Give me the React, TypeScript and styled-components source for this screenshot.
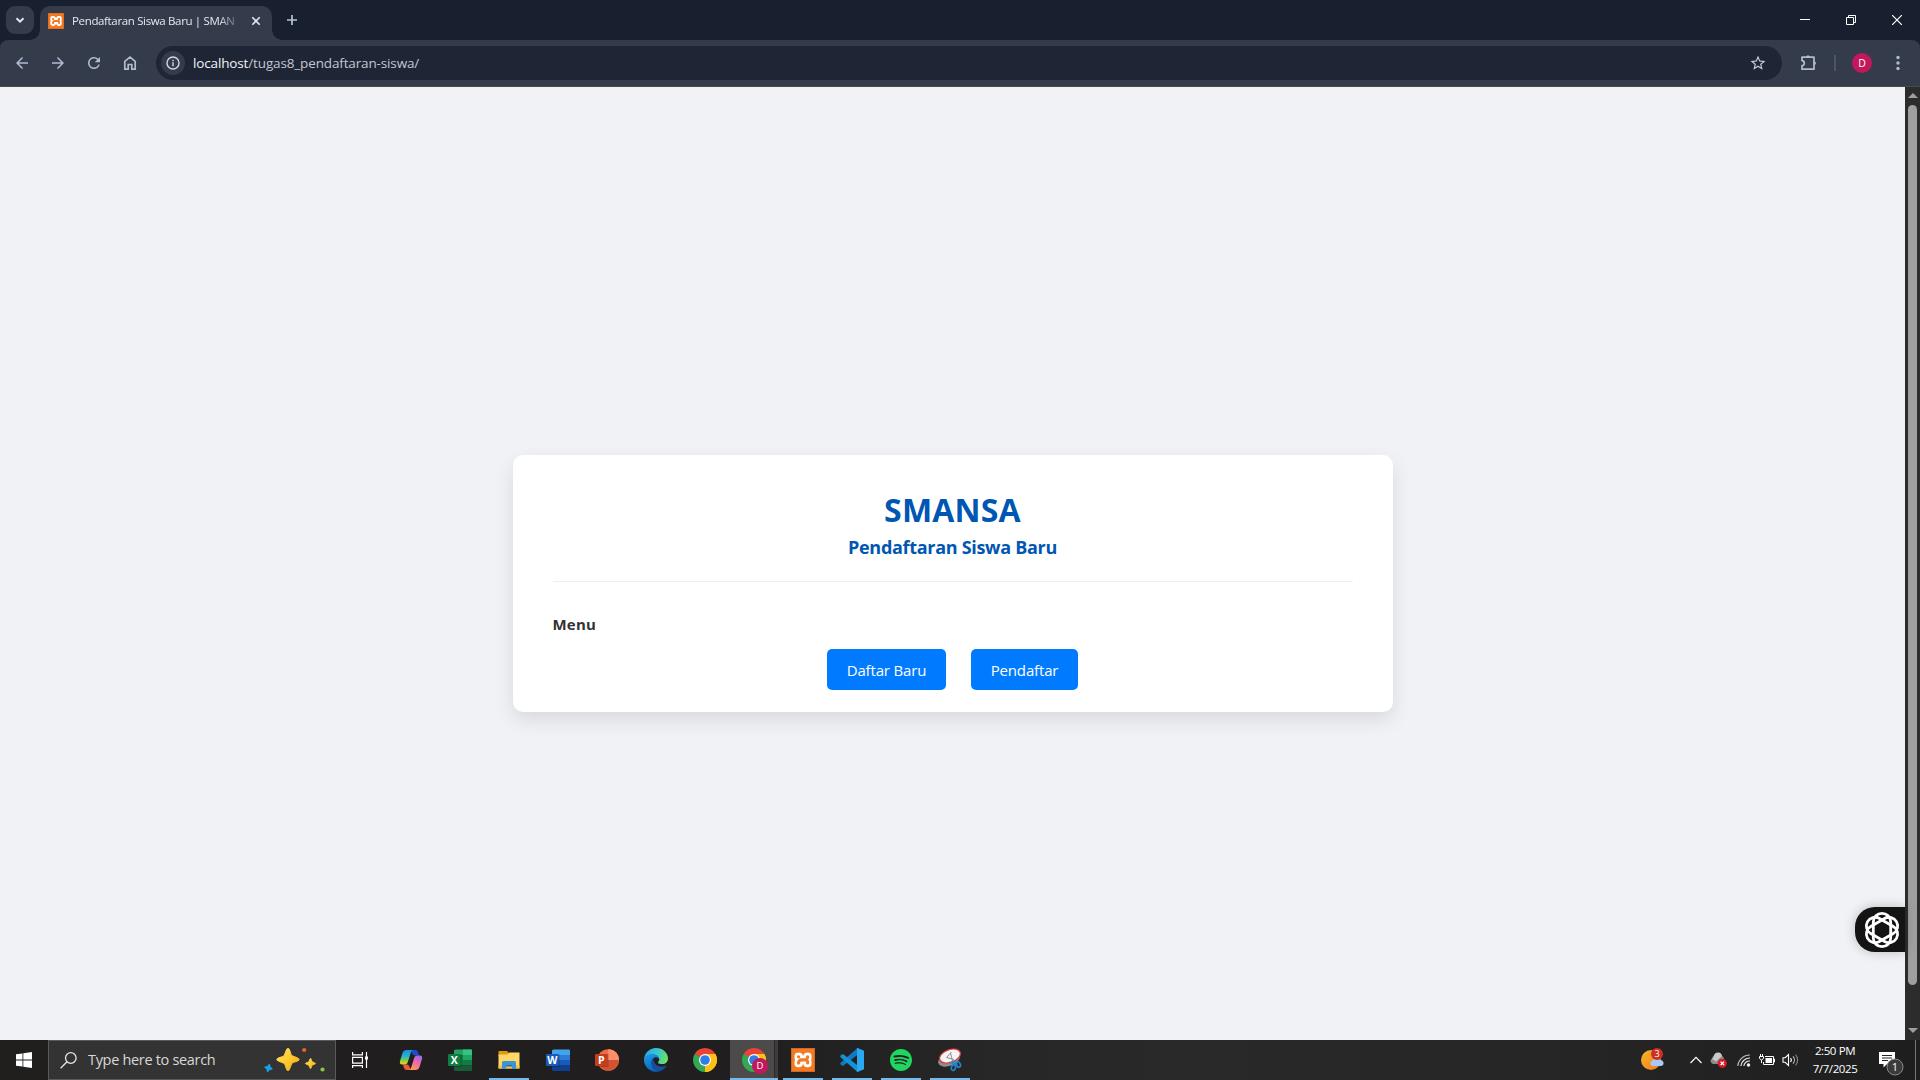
import React from "react";
import styled, { createGlobalStyle } from "styled-components";
import { MdArrowBack, MdArrowForward, MdRefresh, MdStarOutline } from "react-icons/md";
import { SiXampp, SiSpotify } from "react-icons/si";

const GlobalStyle = createGlobalStyle`
  * { box-sizing: border-box; }
  body { margin: 0; overflow: hidden; background: #f0f2f5; }
  svg { display: block; flex: none; }
`;

const Screen = styled.div`
  width: 1920px;
  height: 1080px;
  display: flex;
  flex-direction: column;
  overflow: hidden;
  font-family: "Open Sans", "Noto Sans", sans-serif;
`;

/* ---------- browser chrome ---------- */

const TabStrip = styled.div`
  height: 40px;
  display: flex;
  align-items: flex-start;
  background: #182030;
  padding-left: 6px;
`;

const TabSearch = styled.div`
  width: 28px;
  height: 28px;
  margin-top: 6px;
  border-radius: 9px;
  background: #343b4b;
  display: grid;
  place-items: center;
`;

const Tab = styled.div`
  position: relative;
  width: 232px;
  height: 34px;
  margin: 6px 0 0 6px;
  padding: 0 10px 4px 8px;
  display: flex;
  align-items: center;
  background: #343b4b;
  border-radius: 10px 10px 0 0;

  &::before,
  &::after {
    content: "";
    position: absolute;
    bottom: 0;
    width: 10px;
    height: 10px;
  }
  &::before {
    left: -10px;
    background: radial-gradient(circle at 0 0, transparent 9.5px, #343b4b 10px);
  }
  &::after {
    right: -10px;
    background: radial-gradient(circle at 100% 0, transparent 9.5px, #343b4b 10px);
  }
`;

const TabTitle = styled.div`
  width: 170px;
  margin-left: 8px;
  white-space: nowrap;
  font-size: 11.5px;
  line-height: 18px;
  letter-spacing: -0.35px;
  color: #e6e8f0;
  mask-image: linear-gradient(to right, #000 146px, transparent 170px);
`;

const TabClose = styled.div`
  margin-left: auto;
  width: 12px;
`;

const NewTab = styled.div`
  width: 40px;
  height: 40px;
  display: grid;
  place-items: center;
`;

const WindowControls = styled.div`
  margin-left: auto;
  display: flex;
`;

const WindowButton = styled.div`
  width: 46px;
  height: 40px;
  display: grid;
  place-items: center;
`;

const ToolbarBack = styled.div`
  background: #182030;
`;

const Toolbar = styled.div`
  height: 47px;
  display: flex;
  align-items: center;
  padding-left: 4px;
  background: #343b4b;
  border-bottom: 1px solid #484b55;
  border-radius: 8px 8px 0 0;
  color: #b3bbd3;
`;

const ToolButton = styled.div<{ $w?: number; $gap?: number }>`
  flex: none;
  width: ${(p) => p.$w ?? 36}px;
  height: 36px;
  margin-left: ${(p) => p.$gap ?? 0}px;
  display: grid;
  place-items: center;
`;

const Omnibox = styled.div`
  flex: none;
  width: 1626px;
  height: 34px;
  margin-left: 8px;
  padding: 0 15px 0 5px;
  border-radius: 17px;
  background: #1e2535;
  display: flex;
  align-items: center;
`;

const SiteInfo = styled.div`
  width: 24px;
  height: 24px;
  border-radius: 50%;
  background: #343b4b;
  display: grid;
  place-items: center;
`;

const Url = styled.div`
  flex: 1;
  margin-left: 8px;
  font-size: 13.5px;
  line-height: 20px;
  letter-spacing: -0.14px;
  color: #c3c7d2;

  b {
    font-weight: 400;
    color: #f3f4f8;
  }
`;

const Separator = styled.div`
  flex: none;
  width: 2px;
  height: 16px;
  margin: 0 16px 0 5px;
  background: #4b5468;
`;

const Avatar = styled.div`
  flex: none;
  width: 20px;
  height: 20px;
  border-radius: 50%;
  background: #c2185b;
  color: #fff;
  font-size: 10.5px;
  line-height: 20px;
  text-align: center;
`;

/* ---------- page ---------- */

const Viewport = styled.div`
  height: 953px;
  display: flex;
`;

const Page = styled.main`
  position: relative;
  flex: 1;
  display: flex;
  flex-direction: column;
  align-items: center;
  padding-top: 368px;
  background: #f0f2f5;
`;

const Card = styled.section`
  width: 880px;
  height: 257px;
  padding: 34px 40px 0;
  background: #fff;
  border-radius: 10px;
  box-shadow: 0 8px 20px rgba(0, 0, 0, 0.1);
`;

const CardHeader = styled.header`
  height: 93px;
  text-align: center;
  color: #0056b3;
  border-bottom: 1px solid #eee;
`;

const School = styled.h1`
  margin: 0;
  font-size: 32px;
  line-height: 42px;
  font-weight: 700;
  letter-spacing: 0.2px;
`;

const Subtitle = styled.h2`
  margin: 3px 0 0;
  font-size: 18px;
  line-height: 26px;
  font-weight: 700;
  letter-spacing: -0.3px;
`;

const MenuTitle = styled.h4`
  margin: 31px 0 14px;
  font-size: 15px;
  line-height: 22px;
  font-weight: 700;
  letter-spacing: 0.2px;
  color: #333;
`;

const Actions = styled.nav`
  display: flex;
  justify-content: center;
  gap: 25px;
`;

const ActionLink = styled.a<{ $w: number }>`
  width: ${(p) => p.$w}px;
  height: 41px;
  border-radius: 5px;
  background: #007bff;
  color: #fff;
  font-size: 15px;
  line-height: 42px;
  letter-spacing: -0.15px;
  text-align: center;
  white-space: nowrap;
`;

const FloatingWidget = styled.div`
  position: absolute;
  right: 0;
  top: 820px;
  width: 50px;
  height: 45px;
  border-radius: 20px 0 0 20px;
  background: #141414;
  box-shadow: 0 0 12px rgba(0, 0, 0, 0.22);
  display: grid;
  place-items: center;
  padding-left: 4px;
`;

const Scrollbar = styled.div`
  width: 15px;
  background: #2c2c2c;
  display: flex;
  flex-direction: column;
  align-items: center;
  justify-content: space-between;
  padding: 6px 0 7px;
`;

const Thumb = styled.div`
  width: 9px;
  height: 880px;
  margin: 7px 0 auto;
  border-radius: 5px;
  background: #9f9f9f;
`;

/* ---------- taskbar ---------- */

const Taskbar = styled.footer`
  height: 40px;
  display: flex;
  background: linear-gradient(to right, #201f1e 0, #201e1e 38%, #272727 52%, #292929 62%, #262626 80%, #1e1e1e 100%);
  color: #fff;
`;

const Slot = styled.div<{ $open?: boolean; $active?: boolean }>`
  width: 48px;
  height: 40px;
  display: grid;
  place-items: center;
  background: ${(p) =>
    p.$active
      ? "linear-gradient(#76b9ed, #76b9ed) bottom / 100% 2px no-repeat, linear-gradient(to right, #4c4b4a 44px, #292929 44px, #292929 45px, #3e3d3d 45px)"
      : p.$open
      ? "linear-gradient(#76b9ed, #76b9ed) bottom / 40px 2px no-repeat"
      : "none"};
`;

const SearchBox = styled.div`
  width: 288px;
  height: 40px;
  padding: 0 9px 0 11px;
  display: flex;
  align-items: center;
  background: #333;
  border: 1px solid #5a5a5a;
  font-size: 14.5px;
  letter-spacing: -0.32px;
  color: #d8d8d8;

  span {
    flex: 1;
    margin-left: 11px;
    line-height: 20px;
    white-space: nowrap;
  }
`;

const Apps = styled.div`
  display: flex;
  gap: 1px;
  margin-left: 3px;
`;

const Tray = styled.div`
  margin-left: auto;
  display: flex;
  align-items: center;
`;

const TrayItem = styled.div<{ $gap?: number }>`
  margin-right: ${(p) => p.$gap ?? 0}px;
`;

const Clock = styled.div`
  width: 70px;
  text-align: center;
  font-size: 11.5px;
  line-height: 18px;
  letter-spacing: -0.4px;
  white-space: nowrap;
`;

const Notifications = styled.div`
  width: 45px;
  padding: 5px 0 0 9px;
`;

const ShowDesktop = styled.div`
  width: 5px;
  height: 40px;
  border-left: 1px solid #777;
`;

/* ---------- drawings ---------- */

const ChromeLogo = ({ badge }: { badge?: boolean }) => (
  <svg width="28" height="28" viewBox="-14 -14 28 28">
    <path d="M0 0 L-10.39 -6 A12 12 0 0 1 10.39 -6Z" fill="#ea4335" />
    <path d="M0 0 L10.39 -6 A12 12 0 0 1 0 12Z" fill="#fbc116" />
    <path d="M0 0 L0 12 A12 12 0 0 1 -10.39 -6Z" fill="#34a853" />
    <path d="M0 -6H10.39L0 0Z" fill="#ea4335" />
    <path d="M5.2 3 L0 12 L0 0Z" fill="#fbc116" />
    <path d="M-5.2 3 L-10.39 -6 L0 0Z" fill="#34a853" />
    <path d="M0 -6H10.39A12 12 0 0 1 0 12L5.2 3Z" fill="#fbc116" />
    <circle r="6" fill="#fff" />
    <circle r="4.8" fill="#2f7de9" />
    {badge && (
      <>
        <circle cx="6" cy="6" r="8" fill="#c2185b" />
        <text x="6" y="9.4" fontSize="9.5" textAnchor="middle" fill="#fff">D</text>
      </>
    )}
  </svg>
);

const OfficeTile = ({ letter, colors }: { letter: string; colors: string[] }) => (
  <svg width="24" height="24" viewBox="0 0 24 24">
    <path d="M7.5 1.5H23a1 1 0 0 1 1 1V7H6V3a1.5 1.5 0 0 1 1.5-1.5Z" fill={colors[0]} />
    {letter === "X" && <path d="M15 1.5H23a1 1 0 0 1 1 1V7H15Z" fill="#33c481" />}
    <path d="M6 7H24V12H6Z" fill={colors[1]} />
    <path d="M6 12H24V17.5H6Z" fill={colors[2]} />
    {letter === "X" && <path d="M15 7H24V12H15Z" fill="#21a366" />}
    <path d="M6 17.5H24V22a1 1 0 0 1-1 1H7a1 1 0 0 1-1-1Z" fill={colors[3]} />
    <path d="M6 6H13.5V19H6Z" fill="#000" opacity=".25" />
    <rect y="6" width="12.5" height="12" rx="1" fill={colors[4]} />
    <text x="6.25" y="15.8" fontSize="10.5" fontWeight="700" textAnchor="middle" fill="#fff">{letter}</text>
  </svg>
);

const PowerPoint = () => (
  <svg width="24" height="24" viewBox="0 0 24 24">
    <circle cx="13.2" cy="12" r="10.8" fill="#ed6c47" />
    <path d="M13.2 1.2A10.8 10.8 0 0 1 24 12H13.2Z" fill="#ff8f6b" />
    <path d="M24 12A10.8 10.8 0 0 1 2.7 14V12Z" fill="#d35230" />
    <path d="M6 6H13.5V19H6Z" fill="#000" opacity=".22" />
    <rect y="6" width="12.5" height="12" rx="1" fill="#c43e1c" />
    <text x="6.25" y="15.8" fontSize="10.5" fontWeight="700" textAnchor="middle" fill="#fff">P</text>
  </svg>
);

const Copilot = () => (
  <svg width="24" height="24" viewBox="0 0 24 24">
    <defs>
      <linearGradient id="cpA" x1="0" y1="0" x2="0" y2="1">
        <stop offset="0" stopColor="#1a8ee8" />
        <stop offset=".45" stopColor="#28b5c8" />
        <stop offset=".75" stopColor="#8fce3c" />
        <stop offset="1" stopColor="#f2d21b" />
      </linearGradient>
      <linearGradient id="cpB" x1=".7" y1="0" x2=".3" y2="1">
        <stop offset="0" stopColor="#a06be8" />
        <stop offset=".5" stopColor="#f06aa8" />
        <stop offset="1" stopColor="#ff9a50" />
      </linearGradient>
    </defs>
    <path d="M12 2H16.5C18 2 18.6 3 19 4.3L20 7.5H16C14.5 7.5 13.5 6.5 13 5Z" fill="#1b4fd0" />
    <path d="M4 16.5H8C9.5 16.5 10 17.5 10.5 19L12 22H8C6 22 5.3 21 4.8 19.5Z" fill="#ef5a3c" />
    <path d="M7.5 2H14C12.5 2.5 12 4 11.5 5.5L9 13.5C8.3 15.7 7.5 16.5 5.5 16.5H3C1 16.5 .5 15 1 13L3.5 5C4.2 3 5.5 2 7.5 2Z" fill="url(#cpA)" />
    <path d="M16.5 22H10C11.5 21.5 12 20 12.5 18.5L15 10.5C15.7 8.3 16.5 7.5 18.5 7.5H21C23 7.5 23.5 9 23 11L20.5 19C19.8 21 18.5 22 16.5 22Z" fill="url(#cpB)" />
  </svg>
);

const Explorer = () => (
  <svg width="24" height="24" viewBox="0 0 24 24">
    <path d="M1.5 3H10L12 5V8H1.5Z" fill="#e0980c" />
    <path d="M1.5 6.5H10.5L12.5 4.5H22.5V20.5H1.5Z" fill="#ffd766" />
    <path d="M1.5 17.5H22.5V20.5H1.5Z" fill="#f6c33f" />
    <path d="M5 21V14.5A1.5 1.5 0 0 1 6.5 13H17.5A1.5 1.5 0 0 1 19 14.5V21H15V17H9V21Z" fill="#3e93d6" />
    <path d="M9 17H15V18.5H9Z" fill="#2372b5" />
  </svg>
);

const Edge = () => (
  <svg width="24" height="24" viewBox="0 0 24 24">
    <defs>
      <linearGradient id="edA" x1="0" y1=".3" x2="1" y2=".5">
        <stop offset="0" stopColor="#2aa7e0" />
        <stop offset=".5" stopColor="#35c5d6" />
        <stop offset="1" stopColor="#6fe05c" />
      </linearGradient>
      <linearGradient id="edB" x1="0" y1="0" x2=".5" y2="1">
        <stop offset="0" stopColor="#1da0e8" />
        <stop offset="1" stopColor="#0b61bd" />
      </linearGradient>
    </defs>
    <path d="M0 12A12 12 0 0 1 12 0C19 0 24 5 24 10.5C24 14 21.5 16 18.5 16C16 16 14 15.3 14 14.4C14 13.7 15.3 13.3 15.3 11.6C15.3 9 12.5 6.5 8.5 6.5C4 6.5 1 9 0 12Z" fill="url(#edA)" />
    <path d="M0 12C.5 8.5 4 6 8.5 6C12.5 6 15.3 8.5 15.3 11.3C14.5 9.8 13 9 11.3 9.3C9 9.7 7.5 12 7.5 14.5C7.5 19 11 22.5 15.5 23.3A12 12 0 0 1 0 12Z" fill="url(#edB)" />
    <path d="M9.5 10.5C8 12 7.5 13.5 7.7 15.5C8.3 20 12 23 15.8 23.3C18.5 22.4 20.9 20.5 22.3 18.2C22.6 17.6 22 17.4 21.5 17.7C15 20.5 9.2 16.5 9.5 10.5Z" fill="#1450a0" />
  </svg>
);

const XamppTile = ({ size }: { size: number }) => (
  <svg width={size} height={size} viewBox="0 0 24 24">
    <defs>
      <linearGradient id="xt" x1="0" y1="0" x2="0" y2="1">
        <stop offset="0" stopColor="#c8794a" />
        <stop offset=".12" stopColor="#e8752a" />
        <stop offset=".3" stopColor="#f47a22" />
        <stop offset="1" stopColor="#f47a22" />
      </linearGradient>
    </defs>
    <rect width="24" height="24" rx="1.2" fill="url(#xt)" />
    <rect x="3.5" y="4.5" width="17" height="15" fill="#fff" />
    <SiXampp x="-.5" y="-.5" size={25} color="#f47a22" />
    <path d="M.5 .5H23.5V23.5H.5Z" fill="none" stroke="#c0602a" opacity=".7" />
  </svg>
);

const VSCode = () => (
  <svg width="24" height="24" viewBox="0 0 24 24">
    <path d="M17.5 0L17.8 6.5L3.3 17.8L1.8 17.6L.3 16.2V15Z" fill="#0d7cc4" />
    <path d="M17.5 24L17.8 17.5L3.3 6.2L1.8 6.4L.3 7.8V9Z" fill="#1591d8" />
    <path d="M17.5 0L24 2.8V21.2L17.5 24C16.8 24 16.5 23.5 17 23V1C16.5 .5 16.8 0 17.5 0Z" fill="#2aa9f2" />
  </svg>
);

const Snip = () => (
  <svg width="24" height="24" viewBox="0 0 24 24">
    <ellipse cx="11" cy="11.5" rx="11.3" ry="6.5" transform="rotate(-20 11 11.5)" fill="#8d8d8d" />
    <ellipse cx="12" cy="8" rx="10.8" ry="6.3" transform="rotate(-20 12 8)" fill="#f5f3f3" stroke="#d8383c" strokeWidth="1.2" />
    <path d="M13.5 4L8.5 9.5L16 11.5M12.5 5L14.5 13" stroke="#8b8f94" strokeWidth="1" fill="none" />
    <path d="M12.5 14.5L19 15.5M16 12.5L17 18" stroke="#2b88cc" strokeWidth="1.8" fill="none" />
    <ellipse cx="15.5" cy="19.5" rx="2" ry="3" fill="none" stroke="#2086ca" strokeWidth="1.7" transform="rotate(20 15.5 19.5)" />
    <ellipse cx="20.5" cy="16.5" rx="1.8" ry="2.8" fill="none" stroke="#2086ca" strokeWidth="1.7" transform="rotate(-20 20.5 16.5)" />
  </svg>
);

/* four-pointed star with rounded tips and concave sides */
const star4 = (x: number, y: number, r: number) => {
  const k = r * 0.36;
  const t = r * 0.14;
  return [
    `M${x - t} ${y - r + t}Q${x} ${y - r - t} ${x + t} ${y - r + t}`,
    `Q${x + t * 2} ${y - k} ${x + k} ${y - t * 2.4}`,
    `L${x + r - t} ${y - t}Q${x + r + t} ${y} ${x + r - t} ${y + t}`,
    `Q${x + k} ${y + t * 2} ${x + t * 2.4} ${y + k}`,
    `L${x + t} ${y + r - t}Q${x} ${y + r + t} ${x - t} ${y + r - t}`,
    `Q${x - t * 2} ${y + k} ${x - k} ${y + t * 2.4}`,
    `L${x - r + t} ${y + t}Q${x - r - t} ${y} ${x - r + t} ${y - t}`,
    `Q${x - k} ${y - t * 2} ${x - t * 2.4} ${y - k}Z`,
  ].join("");
};

const Sparkles = () => (
  <svg width="62" height="28" viewBox="0 0 62 28">
    <defs>
      <linearGradient id="gold" x1="0" y1="0" x2="1" y2="1">
        <stop offset="0" stopColor="#ffe36a" />
        <stop offset=".55" stopColor="#fdc82a" />
        <stop offset="1" stopColor="#eda51c" />
      </linearGradient>
    </defs>
    <path d={star4(24, 13.5, 11.2)} fill="url(#gold)" stroke="url(#gold)" strokeWidth="1" strokeLinejoin="round" />
    <path d={star4(46.5, 17.5, 5.2)} fill="url(#gold)" stroke="url(#gold)" strokeWidth=".6" />
    <path d={star4(4.5, 22, 4)} fill="#1ba1e8" stroke="#1ba1e8" strokeWidth=".7" transform="rotate(14 4.5 22)" />
    <circle cx="40.2" cy="4" r="2.1" fill="#e8632c" />
    <circle cx="58.5" cy="23.5" r="2.1" fill="#8cc63f" />
  </svg>
);

const Knot = () => (
  <svg width="36" height="38" viewBox="-18 -19 36 38" fill="none" stroke="#fff" strokeWidth="2.8">
    {[0, 60, 120].map((a) => (
      <rect key={a} x="-8.7" y="-16.7" width="17.4" height="33.4" rx="8.7" transform={`rotate(${a})`} />
    ))}
  </svg>
);

export default function App() {
  return (
    <Screen>
      <GlobalStyle />
      <TabStrip>
        <TabSearch>
          <svg width="12" height="12" viewBox="0 0 12 12" fill="none" stroke="#e3e6ef" strokeWidth="2">
            <path d="M2.5 4.2L6 7.7L9.5 4.2" />
          </svg>
        </TabSearch>
        <Tab>
          <XamppTile size={16} />
          <TabTitle>Pendaftaran Siswa Baru | SMAN</TabTitle>
          <TabClose>
            <svg width="12" height="12" viewBox="0 0 12 12" stroke="#e3e6ef" strokeWidth="1.6">
              <path d="M2.3 2.3L9.7 9.7M9.7 2.3L2.3 9.7" />
            </svg>
          </TabClose>
        </Tab>
        <NewTab>
          <svg width="12" height="12" viewBox="0 0 12 12" stroke="#b9c1d8" strokeWidth="1.7">
            <path d="M6 1V11M1 6H11" />
          </svg>
        </NewTab>
        <WindowControls>
          <WindowButton>
            <svg width="10" height="10" viewBox="0 0 10 10" fill="#fff">
              <path d="M0 4H10V5H0Z" />
            </svg>
          </WindowButton>
          <WindowButton>
            <svg width="10" height="10" viewBox="0 0 10 10" fill="none" stroke="#fff">
              <path d="M.5 2.5H7.5V9.5H.5ZM2.5 2.5V.5H9.5V7.5H7.5" />
            </svg>
          </WindowButton>
          <WindowButton>
            <svg width="10" height="10" viewBox="0 0 10 10" stroke="#fff" strokeWidth="1.2">
              <path d="M0 0L10 10M10 0L0 10" />
            </svg>
          </WindowButton>
        </WindowControls>
      </TabStrip>

      <ToolbarBack>
        <Toolbar>
          <ToolButton><MdArrowBack size={18} /></ToolButton>
          <ToolButton><MdArrowForward size={18} /></ToolButton>
          <ToolButton><MdRefresh size={18} /></ToolButton>
          <ToolButton>
            <svg width="14" height="14" viewBox="0 0 14 14" fill="none" stroke="currentColor" strokeWidth="1.7">
              <path d="M1.8 5.3L7 1.2L12.2 5.3V13.1H8.8V8.5H5.2V13.1H1.8Z" />
            </svg>
          </ToolButton>
          <Omnibox>
            <SiteInfo>
              <svg width="14" height="14" viewBox="0 0 14 14" fill="none" stroke="#d5d8e2" strokeWidth="1.4">
                <circle cx="7" cy="7" r="6" />
                <path d="M7 6.3V10.2M7 3.7V5.2" />
              </svg>
            </SiteInfo>
            <Url><b>localhost</b>/tugas8_pendaftaran-siswa/</Url>
            <MdStarOutline size={18} color="#c5c9d6" />
          </Omnibox>
          <ToolButton $w={40} $gap={7}>
            <svg width="18" height="18" viewBox="0 0 18 18" fill="none" stroke="currentColor" strokeWidth="1.7" strokeLinejoin="round">
              <path d="M2 3.2H14V15.2H2V11.7C3.6 11.5 4.3 10.5 4.3 9.2C4.3 7.9 3.6 6.9 2 6.7Z" />
              <path d="M6.300 3A1.800 1.800 0 0 1 9.700 3ZM14.300 7.500A1.800 1.800 0 0 1 14.300 10.900Z" fill="currentColor" strokeWidth=".8" />
            </svg>
          </ToolButton>
          <Separator />
          <Avatar>D</Avatar>
          <ToolButton $w={44} $gap={4}>
            <svg width="4" height="16" viewBox="0 0 4 16" fill="currentColor">
              <circle cx="2" cy="2.5" r="1.7" />
              <circle cx="2" cy="8" r="1.7" />
              <circle cx="2" cy="13.5" r="1.7" />
            </svg>
          </ToolButton>
        </Toolbar>
      </ToolbarBack>

      <Viewport>
        <Page>
          <Card>
            <CardHeader>
              <School>SMANSA</School>
              <Subtitle>Pendaftaran Siswa Baru</Subtitle>
            </CardHeader>
            <MenuTitle>Menu</MenuTitle>
            <Actions>
              <ActionLink $w={119}>Daftar Baru</ActionLink>
              <ActionLink $w={107}>Pendaftar</ActionLink>
            </Actions>
          </Card>
          <FloatingWidget><Knot /></FloatingWidget>
        </Page>
        <Scrollbar>
          <svg width="10" height="5" viewBox="0 0 10 5" fill="#9f9f9f"><path d="M5 0L10 5H0Z" /></svg>
          <Thumb />
          <svg width="10" height="5" viewBox="0 0 10 5" fill="#9f9f9f"><path d="M5 5L10 0H0Z" /></svg>
        </Scrollbar>
      </Viewport>

      <Taskbar>
        <Slot>
          <svg width="16" height="16" viewBox="0 0 16 16" fill="#fff">
            <path d="M0 2.3L6.5 1.4V7.5H0ZM7.3 1.3L16 0V7.5H7.3ZM0 8.4H6.5V14.6L0 13.7ZM7.3 8.4H16V16L7.3 14.7Z" />
          </svg>
        </Slot>
        <SearchBox>
          <svg width="17" height="17" viewBox="0 0 17 17" fill="none" stroke="#e6e6e6" strokeWidth="1.3">
            <circle cx="10.8" cy="6" r="5.3" />
            <path d="M7 9.8L.6 16.3" />
          </svg>
          <span>Type here to search</span>
          <Sparkles />
        </SearchBox>
        <Slot>
          <svg width="16" height="16" viewBox="0 0 16 16" fill="none" stroke="#fff" strokeWidth="1.2">
            <path d="M.6 0V2.8H10.4V0M.6 5.3H10.4V11.2H.6ZM.6 16V13.6H10.4V16M14.5 0V16" />
            <path d="M13 4.5H16V7.5H13Z" fill="#fff" stroke="none" />
          </svg>
        </Slot>
        <Apps>
          <Slot><Copilot /></Slot>
          <Slot><OfficeTile letter="X" colors={["#21a366", "#107c41", "#107c41", "#185c37", "#107c41"]} /></Slot>
          <Slot $open><Explorer /></Slot>
          <Slot><OfficeTile letter="W" colors={["#41a5ee", "#2b7cd3", "#185abd", "#103f91", "#185abd"]} /></Slot>
          <Slot><PowerPoint /></Slot>
          <Slot><Edge /></Slot>
          <Slot><ChromeLogo /></Slot>
          <Slot $active><ChromeLogo badge /></Slot>
          <Slot $open><XamppTile size={24} /></Slot>
          <Slot $open><VSCode /></Slot>
          <Slot $open><SiSpotify size={22} color="#1ed760" /></Slot>
          <Slot $open><Snip /></Slot>
        </Apps>
        <Tray>
          <TrayItem $gap={25}>
            <svg width="24" height="24" viewBox="0 0 24 24">
              <defs>
                <linearGradient id="sun" x1="0" y1="0" x2="1" y2="1">
                  <stop offset="0" stopColor="#f8b62c" />
                  <stop offset="1" stopColor="#ee7a1a" />
                </linearGradient>
              </defs>
              <circle cx="10" cy="12" r="10" fill="url(#sun)" />
              <path d="M11 18A3 3 0 0 1 11.5 12.5A4.5 4.5 0 0 1 19 12A3 3 0 0 1 20 18Z" fill="#a9c8f5" />
              <circle cx="16" cy="6" r="6" fill="#cf2f22" />
              <text x="16" y="9.3" fontSize="9" textAnchor="middle" fill="#fff">3</text>
            </svg>
          </TrayItem>
          <TrayItem $gap={8}>
            <svg width="12" height="8" viewBox="0 0 12 8" fill="none" stroke="#fff" strokeWidth="1.2">
              <path d="M.5 7L6 1.3L11.5 7" />
            </svg>
          </TrayItem>
          <TrayItem $gap={9}>
            <svg width="18" height="16" viewBox="0 0 18 16">
              <path d="M3 12A3 3 0 0 1 2 6.5A4.5 4.5 0 0 1 9 3.5A4 4 0 0 1 14 7V12Z" fill="#8c8c8c" />
              <path d="M4 5A4 4 0 0 1 12 4L6 9.500L2 7Z" fill="#c9c9c9" />
              <circle cx="12.3" cy="11.3" r="4.600" fill="#d81b2a" />
              <path d="M10.600 9.600L14 13M14 9.600L10.600 13" stroke="#fff" strokeWidth="1.3" />
            </svg>
          </TrayItem>
          <TrayItem $gap={8}>
            <svg width="14" height="14" viewBox="0 0 14 14" fill="none" stroke="#e8e8e8" strokeWidth="1.2">
              <path d="M.8 13A12 12 0 0 1 13 2" opacity=".75" />
              <path d="M3.8 13A9.2 9.2 0 0 1 13 5" />
              <path d="M6.8 13A6.3 6.3 0 0 1 13 8" />
              <circle cx="11.5" cy="12" r="1.2" fill="#fff" />
            </svg>
          </TrayItem>
          <TrayItem $gap={7}>
            <svg width="16" height="12" viewBox="0 0 16 12" fill="none" stroke="#fff">
              <path d="M6 2.5H14.5V10.5H4.5V8M14.5 5H15.5V8H14.5" />
              <path d="M6.500 4H13V9H6.500Z" fill="#fff" stroke="none" />
              <path d="M1.5 0V2M3.5 0V2M.5 2.5H4.5V4.5L2.5 6L.5 4.5ZM2.5 6V9" />
            </svg>
          </TrayItem>
          <TrayItem>
            <svg width="18" height="14" viewBox="0 0 18 14" fill="none" stroke="#fff" strokeWidth="1.1">
              <path d="M1 4.7H3.2L6.5 1.5V12.5L3.2 9.3H1Z" />
              <path d="M8.5 5A3 3 0 0 1 8.5 9" />
              <path d="M11 3.3A5.5 5.5 0 0 1 11 10.7" opacity=".75" />
              <path d="M13.5 1.6A8 8 0 0 1 13.5 12.4" opacity=".45" />
            </svg>
          </TrayItem>
          <Clock>
            <div>2:50 PM</div>
            <div>7/7/2025</div>
          </Clock>
          <Notifications>
            <svg width="26" height="26" viewBox="0 0 26 26">
              <path d="M0 2H16V14H8L4.5 17.5V14H0Z" fill="#fff" />
              <path d="M3 5.5H13M3 8H13M3 10.5H9" stroke="#222" strokeWidth="1" />
              <circle cx="16" cy="17" r="8" fill="#3b3b3b" stroke="#8a8a8a" strokeWidth="1" />
              <text x="16" y="21" fontSize="11" textAnchor="middle" fill="#fff">1</text>
            </svg>
          </Notifications>
          <ShowDesktop />
        </Tray>
      </Taskbar>
    </Screen>
  );
}
